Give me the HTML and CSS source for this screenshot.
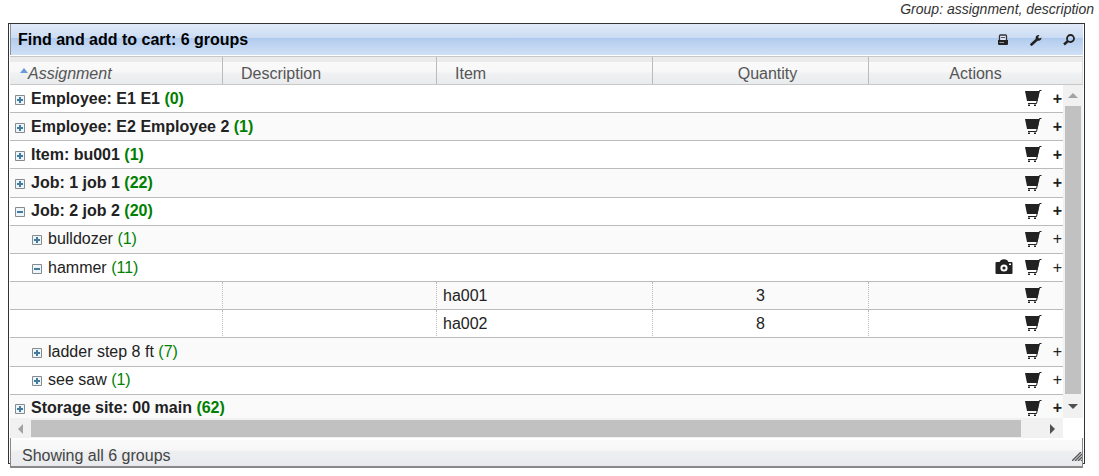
FILE: index.html
```html
<!DOCTYPE html>
<html lang="en">
<head>
	<meta charset="utf-8">
	<title>Find and add to cart</title>
	<link rel="stylesheet" href="styles.css">
</head>
<body>
	<!-- icons shared by the rows -->
	<svg class="sprites" width="0" height="0">
		<symbol id="cart" viewBox="0 0 18 18">
			<path d="M1 2H15.500L13.500 12H3z" fill="#222"/>
			<path d="M17.500 1.500H15.500L12.500 14.500H4" fill="none" stroke="#222" stroke-width="1"/>
			<path d="M4 15.500h2v1.500h-2zM10 15.500h2v1.500h-2z" fill="#222"/>
		</symbol>
		<symbol id="camera" viewBox="0 0 18 16">
			<path d="M1.500 3H4.500L6 1Q9 -.5 12 1L13.500 3H16.500Q17.500 3 17.500 4V14Q17.500 15 16.500 15H1.500Q.5 15 .5 14V4Q.5 3 1.500 3z" fill="#222"/>
			<circle cx="9" cy="9" r="2.600" fill="#222" stroke="#fff" stroke-width="2"/>
			<path d="M14 4.500h2v1.500h-2z" fill="#fff"/>
		</symbol>
		<symbol id="plus" viewBox="0 0 10 10">
			<path d="M.5.5h9v9h-9z" fill="#eef5fa" stroke="#868b8f"/>
			<path d="M2 4h6v2H2zM4 2h2v6H4z" fill="#3f7c9f"/>
		</symbol>
		<symbol id="minus" viewBox="0 0 10 10">
			<path d="M.5.5h9v9h-9z" fill="#eef5fa" stroke="#868b8f"/>
			<path d="M2 4h6v2H2z" fill="#3f7c9f"/>
		</symbol>
	</svg>

	<p class="grouping">Group: assignment, description</p>

	<div class="grid">
		<div class="titlebar">
			<h1>Find and add to cart: 6 groups</h1>
			<button type="button" aria-label="Print">
				<svg width="12" height="12" viewBox="0 0 12 12"><path d="M2.500 6V2Q2.500 1 3.500 1H8.500Q9.500 1 9.500 2V6" fill="#dce6f5" stroke="#333" stroke-width="1.300"/><path d="M4 3.500h4" stroke="#555"/><path d="M1 6H11V9.500Q11 11 10 11H2Q1 11 1 9.500z" fill="#222"/><path d="M2.500 8.500H7" stroke="#99a"/></svg>
			</button>
			<button type="button" aria-label="Settings">
				<svg width="12" height="12" viewBox="0 0 12 12"><path d="M1.500 10.500L7 5.500" stroke="#222" stroke-width="2.600" stroke-linecap="round"/><path d="M9.500 1Q6 .5 5.500 4Q6 6.800 8.500 6.800Q11.500 6.500 11.500 3.500L9.500 4.500L8 3.300z" fill="#222"/></svg>
			</button>
			<button type="button" aria-label="Search">
				<svg width="12" height="12" viewBox="0 0 12 12"><circle cx="7.500" cy="4.500" r="3.500" fill="none" stroke="#222" stroke-width="1.800"/><path d="M5 7L1 10.500" stroke="#222" stroke-width="2.400"/></svg>
			</button>
		</div>

		<table class="head">
			<colgroup><col class="c1"><col class="c2"><col class="c3"><col class="c3"><col></colgroup>
			<tr>
				<th class="sorted"><svg width="8" height="5" viewBox="0 0 8 5"><path d="M0 5L4 0L8 5z" fill="#6a9bd8"/></svg>Assignment</th>
				<th>Description</th>
				<th>Item</th>
				<th class="mid quantity">Quantity</th>
				<th class="mid">Actions</th>
			</tr>
		</table>

		<div class="view">
			<div class="rows">
				<table class="body">
					<colgroup><col class="c1"><col class="c2"><col class="c3"><col class="c3"><col></colgroup>
					<tr class="group">
						<td colspan="4"><button type="button" aria-label="Expand"><svg width="10" height="10"><use href="#plus"/></svg></button>Employee: E1 E1 <span>(0)</span></td>
						<td><div class="actions"><button type="button" aria-label="Add to cart"><svg width="18" height="18"><use href="#cart"/></svg></button><button type="button" class="add">+</button></div></td>
					</tr>
					<tr class="group">
						<td colspan="4"><button type="button" aria-label="Expand"><svg width="10" height="10"><use href="#plus"/></svg></button>Employee: E2 Employee 2 <span>(1)</span></td>
						<td><div class="actions"><button type="button" aria-label="Add to cart"><svg width="18" height="18"><use href="#cart"/></svg></button><button type="button" class="add">+</button></div></td>
					</tr>
					<tr class="group">
						<td colspan="4"><button type="button" aria-label="Expand"><svg width="10" height="10"><use href="#plus"/></svg></button>Item: bu001 <span>(1)</span></td>
						<td><div class="actions"><button type="button" aria-label="Add to cart"><svg width="18" height="18"><use href="#cart"/></svg></button><button type="button" class="add">+</button></div></td>
					</tr>
					<tr class="group">
						<td colspan="4"><button type="button" aria-label="Expand"><svg width="10" height="10"><use href="#plus"/></svg></button>Job: 1 job 1 <span>(22)</span></td>
						<td><div class="actions"><button type="button" aria-label="Add to cart"><svg width="18" height="18"><use href="#cart"/></svg></button><button type="button" class="add">+</button></div></td>
					</tr>
					<tr class="group">
						<td colspan="4"><button type="button" aria-label="Collapse"><svg width="10" height="10"><use href="#minus"/></svg></button>Job: 2 job 2 <span>(20)</span></td>
						<td><div class="actions"><button type="button" aria-label="Add to cart"><svg width="18" height="18"><use href="#cart"/></svg></button><button type="button" class="add">+</button></div></td>
					</tr>
					<tr class="sub">
						<td colspan="4"><button type="button" aria-label="Expand"><svg width="10" height="10"><use href="#plus"/></svg></button>bulldozer <span>(1)</span></td>
						<td><div class="actions"><button type="button" aria-label="Add to cart"><svg width="18" height="18"><use href="#cart"/></svg></button><button type="button" class="add">+</button></div></td>
					</tr>
					<tr class="sub">
						<td colspan="4"><button type="button" aria-label="Collapse"><svg width="10" height="10"><use href="#minus"/></svg></button>hammer <span>(11)</span></td>
						<td><div class="actions"><button type="button" aria-label="Photo"><svg width="18" height="16"><use href="#camera"/></svg></button><button type="button" aria-label="Add to cart"><svg width="18" height="18"><use href="#cart"/></svg></button><button type="button" class="add">+</button></div></td>
					</tr>
					<tr class="item">
						<td></td>
						<td></td>
						<td>ha001</td>
						<td class="mid">3</td>
						<td><div class="actions"><button type="button" aria-label="Add to cart"><svg width="18" height="18"><use href="#cart"/></svg></button></div></td>
					</tr>
					<tr class="item">
						<td></td>
						<td></td>
						<td>ha002</td>
						<td class="mid">8</td>
						<td><div class="actions"><button type="button" aria-label="Add to cart"><svg width="18" height="18"><use href="#cart"/></svg></button></div></td>
					</tr>
					<tr class="sub">
						<td colspan="4"><button type="button" aria-label="Expand"><svg width="10" height="10"><use href="#plus"/></svg></button>ladder step 8 ft <span>(7)</span></td>
						<td><div class="actions"><button type="button" aria-label="Add to cart"><svg width="18" height="18"><use href="#cart"/></svg></button><button type="button" class="add">+</button></div></td>
					</tr>
					<tr class="sub">
						<td colspan="4"><button type="button" aria-label="Expand"><svg width="10" height="10"><use href="#plus"/></svg></button>see saw <span>(1)</span></td>
						<td><div class="actions"><button type="button" aria-label="Add to cart"><svg width="18" height="18"><use href="#cart"/></svg></button><button type="button" class="add">+</button></div></td>
					</tr>
					<tr class="group">
						<td colspan="4"><button type="button" aria-label="Expand"><svg width="10" height="10"><use href="#plus"/></svg></button>Storage site: 00 main <span>(62)</span></td>
						<td><div class="actions"><button type="button" aria-label="Add to cart"><svg width="18" height="18"><use href="#cart"/></svg></button><button type="button" class="add">+</button></div></td>
					</tr>
				</table>
			</div>
			<div class="vscroll">
				<button type="button" aria-label="Scroll up"><svg width="10" height="5" viewBox="0 0 10 5"><path d="M0 5L5 0L10 5z" fill="#a3a3a3"/></svg></button>
				<div class="thumb"></div>
				<button type="button" aria-label="Scroll down"><svg width="10" height="5" viewBox="0 0 10 5"><path d="M0 0H10L5 5z" fill="#505050"/></svg></button>
			</div>
			<div class="hscroll">
				<button type="button" aria-label="Scroll left"><svg width="5" height="10" viewBox="0 0 5 10"><path d="M5 0V10L0 5z" fill="#a3a3a3"/></svg></button>
				<div class="thumb"></div>
				<button type="button" aria-label="Scroll right"><svg width="5" height="10" viewBox="0 0 5 10"><path d="M0 0L5 5L0 10z" fill="#505050"/></svg></button>
			</div>
		</div>

		<div class="footer">
			<span>Showing all 6 groups</span>
			<svg width="10" height="9" viewBox="0 0 10 9"><path d="M0 9L9 0M3 9L10 2M6 9L10 5M9 9L10 8" stroke="#555" stroke-width="1.400"/></svg>
		</div>
	</div>
</body>
</html>
```

FILE: styles.css
```css
body {
	margin: 0;
	min-height: 100vh;
	font-family: "Liberation Sans", Arial, sans-serif;
	font-size: 16px;
	line-height: 20px;
	color: #222;
	background: #fff;
}
button {
	display: flex;
	align-items: center;
	justify-content: center;
	padding: 0;
	border: 0;
	background: none;
	font: inherit;
	color: inherit;
}
.sprites {
	display: block;
}
.grouping {
	margin: 0;
	height: 23px;
	padding-right: 5px;
	font-size: 14px;
	font-style: italic;
	text-align: right;
	line-height: 18px;
	color: #333;
}
.grid {
	margin: 0 14px 0 8px;
	padding: 0 1px;
	border: 1px solid #333;
}

/* title bar */
.titlebar {
	display: flex;
	align-items: center;
	gap: 21px;
	height: 31px;
	padding-right: 8px;
	box-sizing: border-box;
	border-left: 1px solid #8a93a0;
	background: linear-gradient(#e0eaf8, #ccdcf3 44%, #acc9ee 46%, #b7cfef 54%, #d0e0f6);
}
.titlebar h1 {
	flex: 1;
	margin: 0;
	padding-left: 7px;
	font-size: 16px;
	color: #000;
}

/* tables */
table {
	width: 100%;
	table-layout: fixed;
	border-collapse: separate;
	border-spacing: 0;
}
.c1 {
	width: 213px;
}
.c2 {
	width: 214px;
}
.c3 {
	width: 216px;
}
.head {
	margin-top: 1px;
	border: 1px solid #c8c8c8;
	border-width: 1px 0;
	background: linear-gradient(#ebebeb 5px, #fafafa 5px, #f7f7f7 15px, #f0f1f3 16px, #eaebed);
}
.head th {
	height: 27px;
	padding: 6px 0 0 18px;
	box-sizing: border-box;
	border-right: 1px solid #bbb;
	font-weight: normal;
	text-align: left;
	color: #555;
}
.head th:last-child {
	border-right-color: #ddd;
}
.head .sorted {
	padding-left: 10px;
	font-style: italic;
}
.sorted svg {
	vertical-align: 6px;
}
.head .mid {
	padding-left: 0;
	text-align: center;
}
.head .quantity {
	padding-left: 14px;
}

.view {
	display: grid;
	grid-template-columns: 1fr 20px;
	grid-template-rows: 333px 20px;
}
.rows {
	overflow: hidden;
}
.body {
	height: 338px;
}
.body tr:nth-child(even) {
	background: #fafafa;
}
.body td {
	padding: 0;
	border-bottom: 1px solid #bbb;
	white-space: nowrap;
}
.body td > button {
	display: inline-flex;
	width: 10px;
	height: 10px;
	margin: 0 6px 0 5px;
	vertical-align: -1px;
}
.body .sub td > button {
	margin-left: 22px;
}
.group {
	font-weight: bold;
}
.body td > span {
	color: green;
}
.item td:not(:last-child) {
	border-right: 1px dotted #bbb;
}
.item td:nth-child(3) {
	padding-left: 6px;
}
.item .mid {
	text-align: center;
}
.actions {
	display: grid;
	grid-template-columns: 18px 18px 9px;
	justify-content: end;
	align-items: center;
	gap: 11px;
	padding-right: 1px;
}
.actions button {
	grid-column: 2;
	grid-row: 1;
}
.actions button[aria-label="Photo"] {
	grid-column: 1;
}
.actions .add {
	grid-column: 3;
}
.actions svg {
	margin-bottom: 1px;
}

/* scrollbars */
.vscroll, .hscroll {
	display: flex;
	background: #f1f1f1;
}
.vscroll {
	flex-direction: column;
	padding: 0 2px;
}
.hscroll {
	padding: 2px 0 1px;
}
.thumb {
	flex: 1;
	background: #c1c1c1;
}
.vscroll button {
	height: 21px;
}
.vscroll button:last-child {
	height: 24px;
}
.hscroll button {
	width: 21px;
}
.hscroll button:last-child {
	width: 42px;
	padding-left: 21px;
}

/* hangs a little below the outer frame */
.footer {
	position: relative;
	display: flex;
	align-items: center;
	justify-content: space-between;
	height: 30px;
	box-sizing: border-box;
	margin-bottom: -5px;
	padding: 8px 0 0 11px;
	border: solid #888;
	border-width: 0 1px 2px;
	background: linear-gradient(#fff 2px, #fafafa 2px, #f7f7f7 12px, #eeeff1 13px, #e8eaed);
	color: #444;
}
```
